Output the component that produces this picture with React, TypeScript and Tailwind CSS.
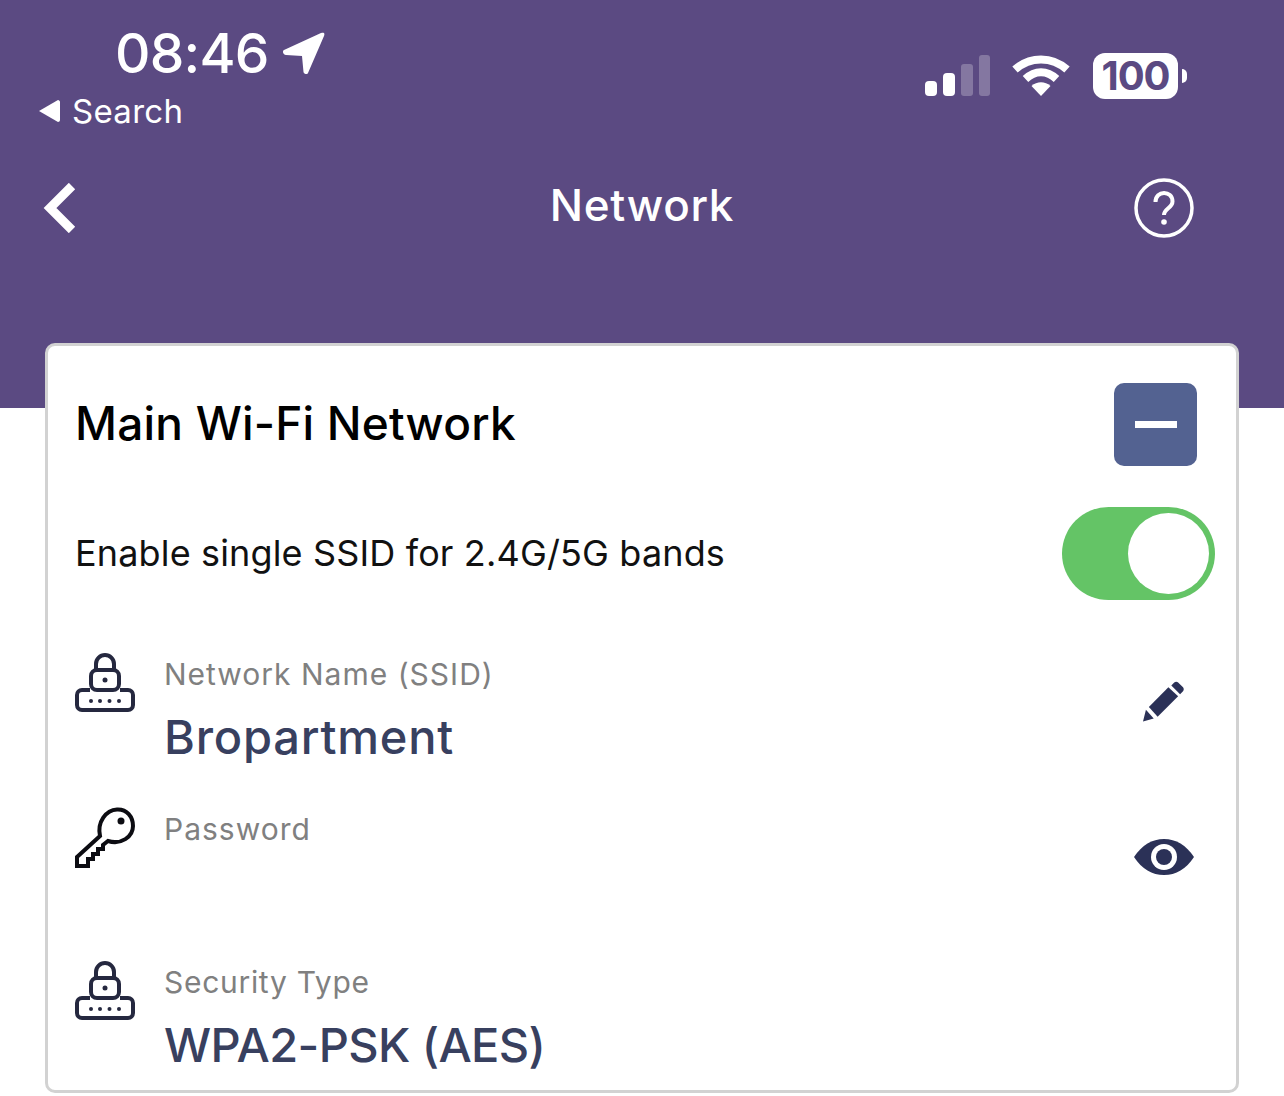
import React from "react";

const sans = "font-['Inter',sans-serif]";

function SignalIcon() {
  return (
    <svg width="66" height="42" viewBox="0 0 66 42" className="block">
      <rect x="0" y="26" width="12" height="15" rx="4" fill="#fff" />
      <rect x="18" y="18" width="12" height="23" rx="4" fill="#fff" />
      <rect x="36" y="9" width="12" height="32" rx="3" fill="#fff" fillOpacity="0.25" />
      <rect x="54" y="0" width="11" height="41" rx="3" fill="#fff" fillOpacity="0.25" />
    </svg>
  );
}

function WifiIcon() {
  return (
    <svg width="58" height="42" viewBox="0 0 58 42" fill="none" className="block">
      <path d="M29 41 L19.500 31 C25 26 33 26 38.500 31 Z" fill="#fff" />
      <path d="M13.500 24 C23 15 35 15 44.500 24" stroke="#fff" strokeWidth="8" />
      <path d="M3 14.500 C18 1 40 1 55 14.500" stroke="#fff" strokeWidth="8" />
    </svg>
  );
}

function LockIcon() {
  return (
    <svg width="60" height="60" viewBox="0 0 60 60" fill="none" className="block">
      <path d="M21 19 V11 a9 9 0 0 1 18 0 V19" stroke="#25283f" strokeWidth="4" />
      <rect x="16" y="17" width="28" height="20" rx="6" stroke="#25283f" strokeWidth="4" fill="#fff" />
      <circle cx="30" cy="27" r="2.5" fill="#25283f" />
      <path d="M15 37 H7 a5 5 0 0 0 -5 5 V52 a5 5 0 0 0 5 5 H53 a5 5 0 0 0 5 -5 V42 a5 5 0 0 0 -5 -5 H45" stroke="#25283f" strokeWidth="4" />
      <circle cx="16" cy="48" r="2" fill="#25283f" />
      <circle cx="25" cy="48" r="2" fill="#25283f" />
      <circle cx="34.500" cy="48" r="2" fill="#25283f" />
      <circle cx="44" cy="48" r="2" fill="#25283f" />
    </svg>
  );
}

function KeyIcon() {
  return (
    <svg width="60" height="62" viewBox="0 0 60 62" fill="none" className="-mt-[1px] block">
      <path
        d="M2 50 L25 29 C22 15 31 3 42 2.500 C52 2 58 10 58 19 C58 30 46 38 33 34 L28 38 V42 L23 42 V47 H18 V52 H13 V59 H2 Z"
        stroke="#0c0c12"
        strokeWidth="4"
      />
      <circle cx="46" cy="14" r="3.500" fill="#0c0c12" />
    </svg>
  );
}

function Field({
  icon,
  label,
  value,
  action,
  className,
  labelClass,
  valueClass,
}: {
  icon: React.ReactNode;
  label: string;
  value?: string;
  action?: React.ReactNode;
  className?: string;
  labelClass?: string;
  valueClass?: string;
}) {
  return (
    <div className={`flex items-start ${className ?? ""}`}>
      <div className="w-[89px] shrink-0">{icon}</div>
      <div className="flex-1 pt-[1px]">
        <p className={`text-[30px] leading-[40px] text-[#808080] ${labelClass ?? "tracking-[1px]"}`}>{label}</p>
        {value && <p className={`mt-[13px] leading-[60px] font-medium text-[#38405f] ${valueClass ?? ""}`}>{value}</p>}
      </div>
      {action}
    </div>
  );
}

export default function App() {
  return (
    <div className={`w-[1284px] h-[1096px] overflow-hidden bg-white ${sans}`}>
      <header className="h-[408px] bg-[#5b4a82] text-white">
        <div className="flex items-start justify-between pl-[38px] pr-[97px] pt-[22px]">
          <div>
            <div className="ml-[77px] flex items-center gap-[14px]">
              <span className="text-[55px] leading-[62px] font-medium tracking-[-0.8px]">08:46</span>
              <svg width="42" height="42" viewBox="0 0 42 42" className="block">
                <path d="M1 18 L38 1 C41 0 42 1 41 4 L25 41 C24 43 21 42 20.500 40 L19 24 L3 23 C0 23 -1 19 1 18 Z" fill="#fff" />
              </svg>
            </div>
            <div className="mt-[1px] flex items-center gap-[12px]">
              <svg width="22" height="22" viewBox="0 0 22 22" className="block">
                <path d="M1 11 L20 0 C21 0 22 1 22 2 V20 C22 21 21 22 20 22 Z" fill="#fff" />
              </svg>
              <span className="text-[33px] leading-[52px] tracking-[0.3px]">Search</span>
            </div>
          </div>
          <div className="mt-[31px] flex items-center">
            <SignalIcon />
            <div className="ml-[21px]"><WifiIcon /></div>
            <div className="ml-[23px] flex h-[46px] w-[85px] items-center justify-center rounded-[12px] bg-white">
              <span className="text-[40px] font-bold leading-none tracking-[-1px] text-[#5b4a82]">100</span>
            </div>
            <div className="ml-[4px] h-[14px] w-[5px] rounded-r-full bg-white" />
          </div>
        </div>
        <div className="mt-[38px] grid grid-cols-[1fr_auto_1fr] items-center pl-[42px] pr-[90px]">
          <svg width="34" height="50" viewBox="0 0 34 50" fill="none" className="block">
            <path d="M30 3 L8 25 L30 47" stroke="#fff" strokeWidth="9" />
          </svg>
          <h1 className="ml-[48px] pb-[6px] text-[44px] leading-[60px] font-medium tracking-[0.7px]">Network</h1>
          <svg width="60" height="60" viewBox="0 0 60 60" fill="none" className="block justify-self-end">
            <circle cx="30" cy="30" r="28" stroke="#fff" strokeWidth="3.500" />
            <path d="M21.500 24 C21.500 12 38.500 12 38.500 23.500 C38.500 30 30 30.500 30 37" stroke="#fff" strokeWidth="4" />
            <circle cx="30" cy="44" r="2.800" fill="#fff" />
          </svg>
        </div>
      </header>

      <main className="relative mx-[45px] -mt-[65px] h-[750px] rounded-[10px] border-[3px] border-[#d2d2d2] bg-white pl-[27px] pr-[21px]">
        <div className="flex items-center justify-between pt-[37px] pr-[18px]">
          <h2 className="pb-[4px] text-[46px] leading-[60px] font-medium tracking-[0.2px] text-black">Main Wi-Fi Network</h2>
          <button className="flex h-[83px] w-[83px] items-center justify-center rounded-[10px] bg-[#536291]">
            <span className="h-[7px] w-[42px] bg-white" />
          </button>
        </div>
        <div className="mt-[41px] flex items-center justify-between">
          <p className="pb-[2px] text-[36px] leading-[50px] tracking-[0.15px] text-[#111]">Enable single SSID for 2.4G/5G bands</p>
          <div className="flex h-[93px] w-[153px] items-center justify-end rounded-full bg-[#64c466] pr-[6px]">
            <div className="h-[81px] w-[81px] rounded-full bg-white" />
          </div>
        </div>
        <Field
          className="mt-[53px]"
          icon={<LockIcon />}
          label="Network Name (SSID)"
          value="Bropartment"
          valueClass="text-[47px] tracking-[0.8px]"
          action={
            <svg width="41" height="42" viewBox="0 0 42 42" className="mr-[31px] mt-[28px] block" fill="#2b3157">
              <path d="M0 41 L3 29 L11 38 Z" />
              <path d="M6 26 L26 6 L36 15 L15 36 Z" />
              <path d="M29 4 L32 1 C33 0 35 0 36 1 L41 6 C42 7 42 9 41 10 L38 13 Z" />
            </svg>
          }
        />
        <Field
          className="mt-[41px]"
          icon={<KeyIcon />}
          label="Password"
          action={
            <svg width="60" height="36" viewBox="0 0 60 36" className="mr-[21px] mt-[31px] block">
              <path d="M0 18 C8 6 18 0 30 0 C42 0 52 6 60 18 C52 30 42 36 30 36 C18 36 8 30 0 18 Z" fill="#2b3157" />
              <circle cx="30" cy="18" r="13" fill="#fff" />
              <circle cx="30" cy="18" r="8" fill="#2b3157" />
            </svg>
          }
        />
        <Field
          className="mt-[86px]"
          icon={<LockIcon />}
          label="Security Type"
          labelClass="tracking-[0.7px]"
          value="WPA2-PSK (AES)"
          valueClass="text-[47px] tracking-[-0.6px]"
        />
      </main>
    </div>
  );
}
